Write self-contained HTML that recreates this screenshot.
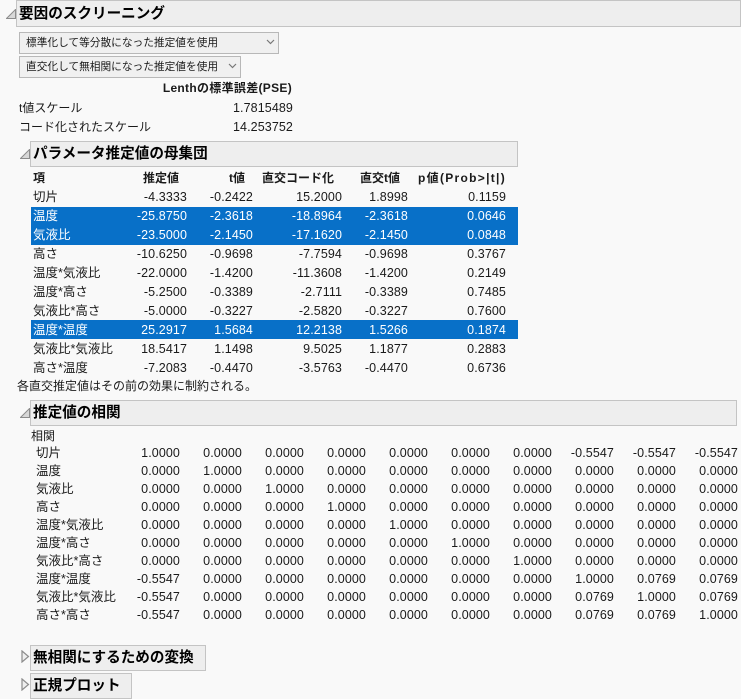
<!DOCTYPE html>
<html><head><meta charset="utf-8">
<style>
html,body{margin:0;padding:0;width:741px;height:699px;overflow:hidden;background:#f9f9f9}
body{position:relative;font-family:"Liberation Sans","Noto Sans CJK JP",sans-serif;font-size:12.5px;color:#1a1a1a}
.t{position:absolute;white-space:nowrap;line-height:16px;height:16px}
.r{text-align:right;letter-spacing:.1px}
.s{font-size:12px}
.hd{position:absolute;box-sizing:border-box;background:#eeeeee;border:1px solid #c4c4c4;height:26px}
.ht{position:absolute;white-space:nowrap;font-weight:bold;font-size:14.6px;line-height:22px;color:#000}
.dd{position:absolute;box-sizing:border-box;background:#f0f0f0;border:1px solid #b8b8b8;height:22px;font-size:10.7px;line-height:20px;padding-left:6px;white-space:nowrap}
.b{font-weight:bold;font-size:12px;letter-spacing:0}
.hl{position:absolute;background:#0870c8;left:31px;width:487px}
.w{color:#fff}
svg{position:absolute}
td{padding:0;height:18px;line-height:16px;text-align:right;vertical-align:top;white-space:nowrap;color:#1a1a1a;letter-spacing:.1px}
</style></head><body>
<div class="hd" style="left:16px;top:0;width:725px;height:27px"></div>
<div class="ht" style="left:19px;top:3px">要因のスクリーニング</div>
<svg style="left:6px;top:9px" width="10" height="10"><path d="M0.5 9.5H9.5V0.5Z" fill="#d8d8d8" stroke="#8c8c8c"/></svg>
<div class="dd" style="left:19px;top:32px;width:260px">標準化して等分散になった推定値を使用</div>
<svg style="left:266px;top:39px" width="9" height="6"><path d="M1 1L4.5 4.5L8 1" fill="none" stroke="#777" stroke-width="1.2"/></svg>
<div class="dd" style="left:19px;top:56px;width:222px">直交化して無相関になった推定値を使用</div>
<svg style="left:228px;top:63px" width="9" height="6"><path d="M1 1L4.5 4.5L8 1" fill="none" stroke="#777" stroke-width="1.2"/></svg>
<div class="t b r" style="left:100px;width:192px;top:80px;letter-spacing:.3px">Lenthの標準誤差(PSE)</div>
<div class="t s" style="left:19px;top:100px">t値スケール</div>
<div class="t r" style="left:193px;width:100px;top:100px">1.7815489</div>
<div class="t s" style="left:19px;top:119px">コード化されたスケール</div>
<div class="t r" style="left:193px;width:100px;top:119px">14.253752</div>
<div class="hd" style="left:30px;top:141px;width:488px"></div>
<div class="ht" style="left:33px;top:143px">パラメータ推定値の母集団</div>
<svg style="left:20px;top:149px" width="10" height="10"><path d="M0.5 9.5H9.5V0.5Z" fill="#d8d8d8" stroke="#8c8c8c"/></svg>
<div class="hl" style="top:207px;height:38px"></div>
<div class="hl" style="top:320px;height:19px"></div>
<div class="t b" style="left:33px;top:170px">項</div>
<div class="t b r" style="left:79px;width:100px;top:170px">推定値</div>
<div class="t b r" style="left:145px;width:100px;top:170px">t値</div>
<div class="t b r" style="left:234px;width:100px;top:170px">直交コード化</div>
<div class="t b r" style="left:300px;width:100px;top:170px">直交t値</div>
<div class="t b r" style="left:406px;width:100px;top:170px;letter-spacing:1.3px">p値(Prob&gt;|t|)</div>
<div class="t" style="left:33px;top:189px">切片</div><div class="t r" style="left:87px;width:100px;top:189px">-4.3333</div><div class="t r" style="left:153px;width:100px;top:189px">-0.2422</div><div class="t r" style="left:242px;width:100px;top:189px">15.2000</div><div class="t r" style="left:308px;width:100px;top:189px">1.8998</div><div class="t r" style="left:406px;width:100px;top:189px">0.1159</div>
<div class="t w" style="left:33px;top:208px">温度</div><div class="t r w" style="left:87px;width:100px;top:208px">-25.8750</div><div class="t r w" style="left:153px;width:100px;top:208px">-2.3618</div><div class="t r w" style="left:242px;width:100px;top:208px">-18.8964</div><div class="t r w" style="left:308px;width:100px;top:208px">-2.3618</div><div class="t r w" style="left:406px;width:100px;top:208px">0.0646</div>
<div class="t w" style="left:33px;top:227px">気液比</div><div class="t r w" style="left:87px;width:100px;top:227px">-23.5000</div><div class="t r w" style="left:153px;width:100px;top:227px">-2.1450</div><div class="t r w" style="left:242px;width:100px;top:227px">-17.1620</div><div class="t r w" style="left:308px;width:100px;top:227px">-2.1450</div><div class="t r w" style="left:406px;width:100px;top:227px">0.0848</div>
<div class="t" style="left:33px;top:246px">高さ</div><div class="t r" style="left:87px;width:100px;top:246px">-10.6250</div><div class="t r" style="left:153px;width:100px;top:246px">-0.9698</div><div class="t r" style="left:242px;width:100px;top:246px">-7.7594</div><div class="t r" style="left:308px;width:100px;top:246px">-0.9698</div><div class="t r" style="left:406px;width:100px;top:246px">0.3767</div>
<div class="t" style="left:33px;top:265px">温度*気液比</div><div class="t r" style="left:87px;width:100px;top:265px">-22.0000</div><div class="t r" style="left:153px;width:100px;top:265px">-1.4200</div><div class="t r" style="left:242px;width:100px;top:265px">-11.3608</div><div class="t r" style="left:308px;width:100px;top:265px">-1.4200</div><div class="t r" style="left:406px;width:100px;top:265px">0.2149</div>
<div class="t" style="left:33px;top:284px">温度*高さ</div><div class="t r" style="left:87px;width:100px;top:284px">-5.2500</div><div class="t r" style="left:153px;width:100px;top:284px">-0.3389</div><div class="t r" style="left:242px;width:100px;top:284px">-2.7111</div><div class="t r" style="left:308px;width:100px;top:284px">-0.3389</div><div class="t r" style="left:406px;width:100px;top:284px">0.7485</div>
<div class="t" style="left:33px;top:303px">気液比*高さ</div><div class="t r" style="left:87px;width:100px;top:303px">-5.0000</div><div class="t r" style="left:153px;width:100px;top:303px">-0.3227</div><div class="t r" style="left:242px;width:100px;top:303px">-2.5820</div><div class="t r" style="left:308px;width:100px;top:303px">-0.3227</div><div class="t r" style="left:406px;width:100px;top:303px">0.7600</div>
<div class="t w" style="left:33px;top:322px">温度*温度</div><div class="t r w" style="left:87px;width:100px;top:322px">25.2917</div><div class="t r w" style="left:153px;width:100px;top:322px">1.5684</div><div class="t r w" style="left:242px;width:100px;top:322px">12.2138</div><div class="t r w" style="left:308px;width:100px;top:322px">1.5266</div><div class="t r w" style="left:406px;width:100px;top:322px">0.1874</div>
<div class="t" style="left:33px;top:341px">気液比*気液比</div><div class="t r" style="left:87px;width:100px;top:341px">18.5417</div><div class="t r" style="left:153px;width:100px;top:341px">1.1498</div><div class="t r" style="left:242px;width:100px;top:341px">9.5025</div><div class="t r" style="left:308px;width:100px;top:341px">1.1877</div><div class="t r" style="left:406px;width:100px;top:341px">0.2883</div>
<div class="t" style="left:33px;top:360px">高さ*温度</div><div class="t r" style="left:87px;width:100px;top:360px">-7.2083</div><div class="t r" style="left:153px;width:100px;top:360px">-0.4470</div><div class="t r" style="left:242px;width:100px;top:360px">-3.5763</div><div class="t r" style="left:308px;width:100px;top:360px">-0.4470</div><div class="t r" style="left:406px;width:100px;top:360px">0.6736</div>
<div class="t s" style="left:17px;top:378px">各直交推定値はその前の効果に制約される。</div>
<div class="hd" style="left:30px;top:400px;width:707px"></div>
<div class="ht" style="left:33px;top:402px">推定値の相関</div>
<svg style="left:20px;top:408px" width="10" height="10"><path d="M0.5 9.5H9.5V0.5Z" fill="#d8d8d8" stroke="#8c8c8c"/></svg>
<div class="t s" style="left:31px;top:428px">相関</div>
<div class="t" style="left:36px;top:445px">切片</div>
<div class="t" style="left:36px;top:463px">温度</div>
<div class="t" style="left:36px;top:481px">気液比</div>
<div class="t" style="left:36px;top:499px">高さ</div>
<div class="t" style="left:36px;top:517px">温度*気液比</div>
<div class="t" style="left:36px;top:535px">温度*高さ</div>
<div class="t" style="left:36px;top:553px">気液比*高さ</div>
<div class="t" style="left:36px;top:571px">温度*温度</div>
<div class="t" style="left:36px;top:589px">気液比*気液比</div>
<div class="t" style="left:36px;top:607px">高さ*高さ</div>
<table style="position:absolute;left:118px;top:445px;border-collapse:collapse;border-spacing:0;table-layout:fixed;width:620px;font-size:12.5px">
<colgroup><col style="width:62px"><col style="width:62px"><col style="width:62px"><col style="width:62px"><col style="width:62px"><col style="width:62px"><col style="width:62px"><col style="width:62px"><col style="width:62px"><col style="width:62px"></colgroup>
<tr><td>1.0000</td><td>0.0000</td><td>0.0000</td><td>0.0000</td><td>0.0000</td><td>0.0000</td><td>0.0000</td><td>-0.5547</td><td>-0.5547</td><td>-0.5547</td></tr>
<tr><td>0.0000</td><td>1.0000</td><td>0.0000</td><td>0.0000</td><td>0.0000</td><td>0.0000</td><td>0.0000</td><td>0.0000</td><td>0.0000</td><td>0.0000</td></tr>
<tr><td>0.0000</td><td>0.0000</td><td>1.0000</td><td>0.0000</td><td>0.0000</td><td>0.0000</td><td>0.0000</td><td>0.0000</td><td>0.0000</td><td>0.0000</td></tr>
<tr><td>0.0000</td><td>0.0000</td><td>0.0000</td><td>1.0000</td><td>0.0000</td><td>0.0000</td><td>0.0000</td><td>0.0000</td><td>0.0000</td><td>0.0000</td></tr>
<tr><td>0.0000</td><td>0.0000</td><td>0.0000</td><td>0.0000</td><td>1.0000</td><td>0.0000</td><td>0.0000</td><td>0.0000</td><td>0.0000</td><td>0.0000</td></tr>
<tr><td>0.0000</td><td>0.0000</td><td>0.0000</td><td>0.0000</td><td>0.0000</td><td>1.0000</td><td>0.0000</td><td>0.0000</td><td>0.0000</td><td>0.0000</td></tr>
<tr><td>0.0000</td><td>0.0000</td><td>0.0000</td><td>0.0000</td><td>0.0000</td><td>0.0000</td><td>1.0000</td><td>0.0000</td><td>0.0000</td><td>0.0000</td></tr>
<tr><td>-0.5547</td><td>0.0000</td><td>0.0000</td><td>0.0000</td><td>0.0000</td><td>0.0000</td><td>0.0000</td><td>1.0000</td><td>0.0769</td><td>0.0769</td></tr>
<tr><td>-0.5547</td><td>0.0000</td><td>0.0000</td><td>0.0000</td><td>0.0000</td><td>0.0000</td><td>0.0000</td><td>0.0769</td><td>1.0000</td><td>0.0769</td></tr>
<tr><td>-0.5547</td><td>0.0000</td><td>0.0000</td><td>0.0000</td><td>0.0000</td><td>0.0000</td><td>0.0000</td><td>0.0769</td><td>0.0769</td><td>1.0000</td></tr>
</table>
<div class="hd" style="left:30px;top:645px;width:176px"></div>
<div class="ht" style="left:33px;top:647px">無相関にするための変換</div>
<svg style="left:21px;top:650px" width="9" height="13"><path d="M1 1L7.5 6.5L1 12Z" fill="#eee" stroke="#8c8c8c" stroke-width="1.2"/></svg>
<div class="hd" style="left:30px;top:673px;width:102px"></div>
<div class="ht" style="left:33px;top:675px">正規プロット</div>
<svg style="left:21px;top:678px" width="9" height="13"><path d="M1 1L7.5 6.5L1 12Z" fill="#eee" stroke="#8c8c8c" stroke-width="1.2"/></svg>
</body></html>
